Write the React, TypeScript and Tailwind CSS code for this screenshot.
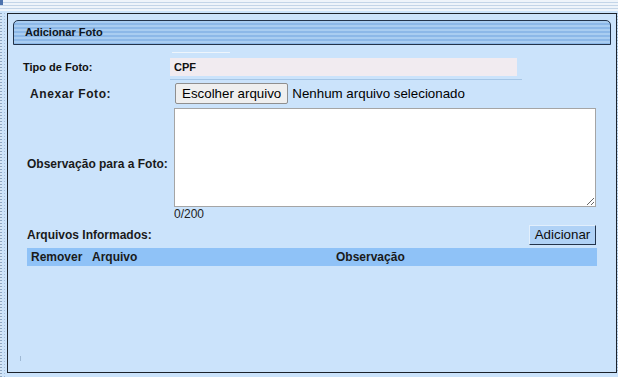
import React from "react";

export default function App() {
  return (
    <div className="w-[618px] h-[377px] bg-[#cbe3fb] flex flex-col overflow-hidden font-['Liberation_Sans',Arial,sans-serif] text-[#111]">
      <div className="h-[11px] shrink-0 bg-[repeating-linear-gradient(to_bottom,#eef4fa_0px,#eef4fa_2px,#c3d5e8_2px,#c3d5e8_3px)] flex">
        <div className="w-[3px] h-[5px] bg-[#4d73ad]" />
      </div>
      <div className="h-[2px] shrink-0" />
      <div className="flex shrink-0">
        <div className="w-[7px] h-[364px] flex">
          <div className="w-[2px] h-full bg-[repeating-linear-gradient(to_bottom,#8ea7c4_0px,#8ea7c4_1px,#d6e6f6_1px,#d6e6f6_3px)]" />
          <div className="w-[2px]" />
          <div className="w-[1px] h-full bg-[repeating-linear-gradient(to_bottom,#a7bdd6_0px,#a7bdd6_1px,#cfe3f8_1px,#cfe3f8_3px)]" />
        </div>
        <div className="w-[610px] h-[360px] border border-[#1c232c] flex flex-col">
          {/* header */}
          <div className="mt-[6px] ml-[5px] w-[598px] h-[25px] border border-[#22334a] rounded-tl-[5px] rounded-tr-[5px] bg-[repeating-linear-gradient(to_bottom,#a9cdf1_0px,#a9cdf1_2px,#8cb8e8_2px,#8cb8e8_4px)] flex items-center pl-[11px]">
            <span className="text-[11px] font-bold leading-none text-[#0d1520]">Adicionar Foto</span>
          </div>

          <div className="mt-[7px] ml-[164px] w-[58px] h-px bg-[#eef5fc]" />

          {/* Tipo de Foto */}
          <div className="mt-[5px] flex items-center h-[18px]">
            <div className="w-[162px] pl-[15px] text-[11px] font-bold leading-none">Tipo de Foto:</div>
            <div className="w-[347px] h-[18px] bg-[#f1ebf0] pl-[4px] flex items-center text-[11px] font-bold leading-none">CPF</div>
          </div>

          <div className="mt-[3px] ml-[162px] w-[352px] h-px bg-[#a6c6e6]" />

          {/* Anexar Foto */}
          <div className="mt-[3px] flex items-center h-[21px]">
            <div className="w-[167px] pl-[22px] text-[12px] font-bold leading-none tracking-[0.6px] text-[#1a1a1a]">Anexar Foto:</div>
            <div className="h-[21px] px-[6px] border border-[#8f8f8f] rounded-[2px] bg-[#efefef] flex items-center text-[13.33px] leading-none text-black">
              Escolher arquivo
            </div>
            <span className="ml-[4px] text-[13.33px] leading-none text-black">Nenhum arquivo selecionado</span>
          </div>

          {/* Observacao */}
          <div className="mt-[4px] flex items-center">
            <div className="w-[166px] pl-[19px] text-[12px] font-bold leading-none text-[#1a1a1a]">Observação para a Foto:</div>
            <div className="flex flex-col">
              <textarea
                readOnly
                className="w-[422px] h-[99px] border border-[#a5a5a5] bg-white block outline-none resize"
              />
              <div className="h-[12px] text-[12px] leading-[12px] text-[#222] mt-px">0/200</div>
            </div>
          </div>

          {/* Arquivos Informados */}
          <div className="mt-[5px] flex items-center h-[20px]">
            <div className="flex-1 pl-[19px] text-[12px] font-bold leading-none text-[#1a1a1a]">Arquivos Informados:</div>
            <div className="mr-[20px] h-[20px] w-[67px] flex items-center justify-center bg-[#b0d2f6] border border-t-[#e2effc] border-l-[#e2effc] border-r-[#22344c] border-b-[#22344c] text-[13.33px] leading-none text-[#0d0d0d]">
              Adicionar
            </div>
          </div>

          {/* table header */}
          <div className="mt-[3px] ml-[19px] w-[570px] h-[18px] bg-[#8fc2f7] flex items-center text-[12px] font-bold leading-none text-[#1a1a1a]">
            <div className="w-[65px] pl-[4px]">Remover</div>
            <div className="w-[244px]">Arquivo</div>
            <div>Observação</div>
          </div>

          <div className="mt-auto mb-[11px] ml-[12px] w-px h-[5px] bg-[#9fb9d4]" />
        </div>
        <div className="w-px h-[360px] bg-[repeating-linear-gradient(to_bottom,#9fb6cf_0px,#9fb6cf_1px,#cbe3fb_1px,#cbe3fb_3px)]" />
      </div>
    </div>
  );
}
